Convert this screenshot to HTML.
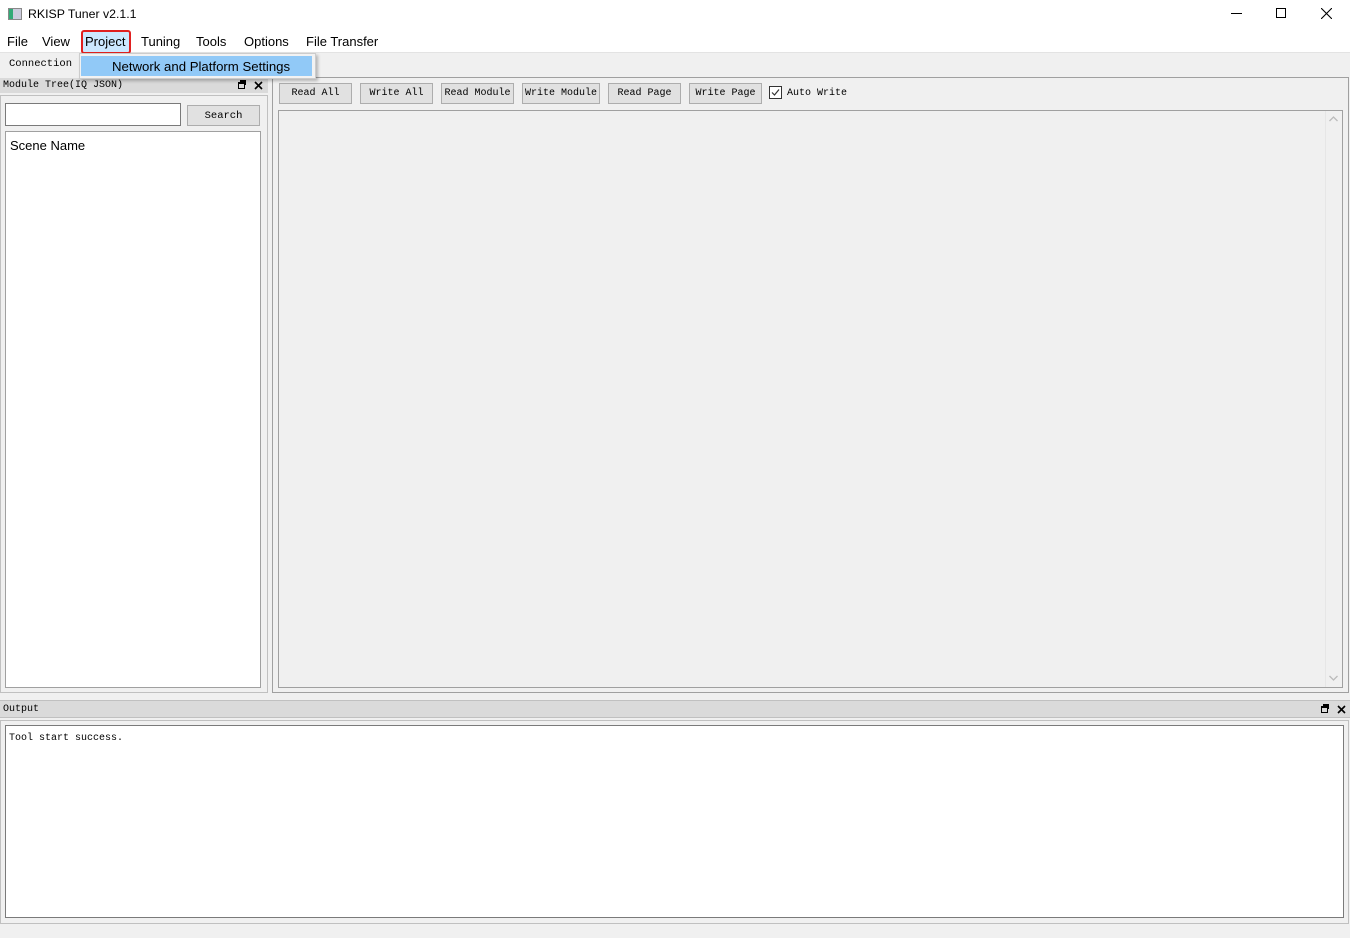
<!DOCTYPE html>
<html><head><meta charset="utf-8"><style>
*{box-sizing:border-box;margin:0;padding:0}
body{width:1350px;height:938px;background:#f0f0f0;position:relative;overflow:hidden;font-family:"Liberation Sans","Microsoft YaHei",sans-serif;font-size:13px;color:#000}
.a{position:absolute;white-space:nowrap}
.m{font-family:"Liberation Mono",monospace;font-size:10px}
.btn{position:absolute;top:83px;height:21px;background:#e1e1e1;border:1px solid #adadad;font-family:"Liberation Mono",monospace;font-size:10px;text-align:center;line-height:20px;white-space:nowrap;overflow:hidden}
</style></head><body>
<div class="a" style="left:0;top:0;width:1350px;height:52px;background:#fff"></div>
<div class="a" style="left:0;top:52px;width:1350px;height:1px;background:#e3e3e3"></div>
<!-- title -->
<div class="a" style="left:8px;top:8px;width:14px;height:12px;border:1px solid #888;background:linear-gradient(90deg,#3a7 0 4px,#ccd 4px)"></div>
<div class="a" style="left:28px;top:7px;font-size:12.3px">RKISP Tuner v2.1.1</div>
<div class="a" style="left:1231px;top:13px;width:11px;height:1px;background:#000"></div>
<div class="a" style="left:1276px;top:8px;width:10px;height:10px;border:1px solid #000"></div>
<svg class="a" style="left:1321px;top:8px" width="11" height="11"><path d="M0 0L11 11M11 0L0 11" stroke="#000" stroke-width="1.1"/></svg>
<!-- menu -->
<div class="a" style="left:7px;top:34px">File</div>
<div class="a" style="left:42px;top:34px">View</div>
<div class="a" style="left:81px;top:30px;width:50px;height:24px;background:#cce8ff;border:2px solid #e02020;border-radius:3px"></div>
<div class="a" style="left:85px;top:34px">Project</div>
<div class="a" style="left:141px;top:34px">Tuning</div>
<div class="a" style="left:196px;top:34px">Tools</div>
<div class="a" style="left:244px;top:34px">Options</div>
<div class="a" style="left:306px;top:34px">File Transfer</div>
<!-- toolbar -->
<div class="a m" style="left:9px;top:58px;font-size:10.5px">Connection</div>
<!-- left dock -->
<div class="a" style="left:0;top:78px;width:268px;height:15px;background:#dadada"></div>
<div class="a m" style="left:3px;top:80px">Module Tree(IQ JSON)</div>
<div class="a" style="left:238px;top:82px;width:7px;height:7px;border:1px solid #000;border-top-width:2px;background:#dadada"></div>
<div class="a" style="left:240px;top:80px;width:6px;height:5px;border:1px solid #000;border-width:2px 1px 0 0"></div>
<svg class="a" style="left:254px;top:81px" width="9" height="9"><path d="M1 1L8 8M8 1L1 8" stroke="#000" stroke-width="1.6"/></svg>
<div class="a" style="left:0;top:95px;width:268px;height:598px;border:1px solid #c0c0c0"></div>
<div class="a" style="left:5px;top:103px;width:176px;height:23px;background:#fff;border:1px solid #7a7a7a"></div>
<div class="a" style="left:187px;top:105px;width:73px;height:21px;background:#e1e1e1;border:1px solid #adadad;font-family:'Liberation Mono',monospace;font-size:10.5px;text-align:center;line-height:20px">Search</div>
<div class="a" style="left:5px;top:131px;width:256px;height:557px;background:#fff;border:1px solid #a0a0a0"></div>
<div class="a" style="left:10px;top:138px">Scene Name</div>
<!-- right dock -->
<div class="a" style="left:272px;top:77px;width:1077px;height:616px;border:1px solid #a0a0a0"></div>
<div class="btn" style="left:279px;width:73px">Read All</div>
<div class="btn" style="left:360px;width:73px">Write All</div>
<div class="btn" style="left:441px;width:73px">Read Module</div>
<div class="btn" style="left:522px;width:78px">Write Module</div>
<div class="btn" style="left:608px;width:73px">Read Page</div>
<div class="btn" style="left:689px;width:73px">Write Page</div>
<div class="a" style="left:769px;top:86px;width:13px;height:13px;border:1px solid #333;background:#fff"></div>
<svg class="a" style="left:770px;top:87px" width="11" height="11"><path d="M2 5.5L4.5 8L9 2.5" stroke="#333" fill="none" stroke-width="1.2"/></svg>
<div class="a m" style="left:787px;top:88px">Auto Write</div>
<div class="a" style="left:278px;top:110px;width:1065px;height:578px;border:1px solid #a0a0a0;background:#f0f0f0"></div>
<div class="a" style="left:1325px;top:111px;width:17px;height:576px;border-left:1px solid #e6e6e6"></div>
<svg class="a" style="left:1329px;top:116px" width="9" height="6"><path d="M0.5 5L4.5 1L8.5 5" stroke="#bbb" fill="none" stroke-width="1.3"/></svg>
<svg class="a" style="left:1329px;top:675px" width="9" height="6"><path d="M0.5 1L4.5 5L8.5 1" stroke="#bbb" fill="none" stroke-width="1.3"/></svg>
<!-- output -->
<div class="a" style="left:0;top:700px;width:1350px;height:18px;background:#dadada;border-top:1px solid #c0c0c0;border-bottom:1px solid #c0c0c0"></div>
<div class="a m" style="left:3px;top:704px">Output</div>
<div class="a" style="left:1321px;top:706px;width:7px;height:7px;border:1px solid #000;border-top-width:2px;background:#dadada"></div>
<div class="a" style="left:1323px;top:704px;width:6px;height:5px;border:1px solid #000;border-width:2px 1px 0 0"></div>
<svg class="a" style="left:1337px;top:705px" width="9" height="9"><path d="M1 1L8 8M8 1L1 8" stroke="#000" stroke-width="1.6"/></svg>
<div class="a" style="left:0;top:720px;width:1349px;height:204px;border:1px solid #c0c0c0"></div>
<div class="a" style="left:5px;top:725px;width:1339px;height:193px;background:#fff;border:1px solid #7a7a7a"></div>
<div class="a m" style="left:9px;top:733px">Tool start success.</div>
<!-- dropdown -->
<div class="a" style="left:79px;top:53px;width:237px;height:26px;background:#f2f2f2;border:1px solid #ccc;box-shadow:2px 2px 3px rgba(0,0,0,.25)"></div>
<div class="a" style="left:81px;top:56px;width:231px;height:20px;background:#91c9f7"></div>
<div class="a" style="left:112px;top:59px;font-size:13.2px">Network and Platform Settings</div>
</body></html>
